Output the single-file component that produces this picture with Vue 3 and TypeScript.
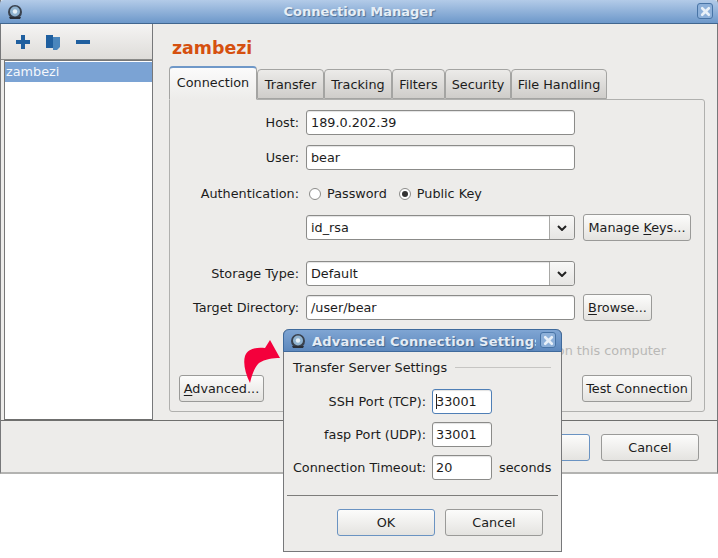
<script setup lang="ts">
const tabs: string[] = ['Connection', 'Transfer', 'Tracking', 'Filters', 'Security', 'File Handling']
const widths: number[] = [88, 67, 68, 53, 66, 96]
</script>

<template>
  <div class="desk">
    <section class="win">
      <header class="titlebar">
        <svg class="appicon" viewBox="0 0 16 16"><circle cx="8" cy="8" r="7" fill="#39414d"/><circle cx="8" cy="7.5" r="5" fill="#8fb2cf"/><circle cx="8" cy="7.5" r="2.2" fill="#e6f0f7"/><path d="M2 13h12l-1 2H3z" fill="#2a2f38"/></svg>
        <span class="ttext">Connection Manager</span>
        <span class="close"><svg viewBox="0 0 10 10" width="11" height="11"><path d="M2 2l6 6M8 2l-6 6" stroke="#e8f0f8" stroke-width="2.4" stroke-linecap="round"/></svg></span>
      </header>
      <div class="body">
        <aside class="side">
          <div class="toolbar">
            <svg class="tool" viewBox="0 0 18 18"><path d="M7 2h4v5h5v4h-5v5H7v-5H2V7h5z" fill="#1f5f9f"/></svg>
            <svg class="tool" viewBox="0 0 18 18"><path d="M2 2h7v13H2z" fill="#1f5f9f"/><path d="M9 4h7v10l-3 3H9z" fill="#4a86bd"/></svg>
            <svg class="tool" viewBox="0 0 18 18"><rect x="2" y="7" width="14" height="4" fill="#1f5f9f"/></svg>
          </div>
          <div class="list"><div class="sel">zambezi</div></div>
        </aside>
        <main class="main">
          <h1 class="name">zambezi</h1>
          <div class="tabs">
            <div v-for="(t, i) in tabs" :key="t" class="tab" :class="{ active: i === 0 }" :style="{ width: widths[i] + 'px' }">{{ t }}</div>
          </div>
          <div class="pane">
            <div class="row r1"><label>Host:</label><div class="input wide">189.0.202.39</div></div>
            <div class="row r2"><label>User:</label><div class="input wide">bear</div></div>
            <div class="row r3">
              <label>Authentication:</label>
              <span class="radio"></span><span class="rlabel">Password</span>
              <span class="radio on"></span><span class="rlabel">Public Key</span>
            </div>
            <div class="row r4">
              <label></label>
              <div class="input wide combo"><span>id_rsa</span><i class="arrow"><svg viewBox="0 0 10 6" width="10" height="6"><path d="M1 1l4 4 4-4" fill="none" stroke="#222" stroke-width="2"/></svg></i></div>
              <button class="btn keys">Manage <u>K</u>eys...</button>
            </div>
            <div class="row r5">
              <label>Storage Type:</label>
              <div class="input wide combo"><span>Default</span><i class="arrow"><svg viewBox="0 0 10 6" width="10" height="6"><path d="M1 1l4 4 4-4" fill="none" stroke="#222" stroke-width="2"/></svg></i></div>
            </div>
            <div class="row r6">
              <label>Target Directory:</label>
              <div class="input wide">/user/bear</div>
              <button class="btn browse"><u>B</u>rowse...</button>
            </div>
            <div class="faint">on this computer</div>
            <div class="actions">
              <button class="btn adv"><u>A</u>dvanced...</button>
              <button class="btn test">Test Connection</button>
            </div>
          </div>
        </main>
      </div>
      <footer class="foot">
        <button class="btn dlg focus">OK</button>
        <button class="btn dlg">Cancel</button>
      </footer>
    </section>

    <svg class="curve" viewBox="0 0 42 46" width="42" height="46"><path d="M10 44C5 34 3 24 5 17 8 10 15 8 25 9L30 1 40 19C33 19 25 20 19 24 15 28 12 35 10 44Z" fill="#f4003c"/></svg>

    <section class="dialog">
      <header class="dtitle">
        <svg class="appicon" viewBox="0 0 16 16"><circle cx="8" cy="8" r="7" fill="#39414d"/><circle cx="8" cy="7.5" r="5" fill="#8fb2cf"/><circle cx="8" cy="7.5" r="2.2" fill="#e6f0f7"/><path d="M2 13h12l-1 2H3z" fill="#2a2f38"/></svg>
        <span class="dttext">Advanced Connection Settings</span>
        <span class="close dclose"><svg viewBox="0 0 10 10" width="11" height="11"><path d="M2 2l6 6M8 2l-6 6" stroke="#e8f0f8" stroke-width="2.4" stroke-linecap="round"/></svg></span>
      </header>
      <div class="group"><span>Transfer Server Settings</span><i></i></div>
      <div class="drow d1"><label>SSH Port (TCP):</label><div class="input port focused"><b class="caret"></b>33001</div></div>
      <div class="drow d2"><label>fasp Port (UDP):</label><div class="input port">33001</div></div>
      <div class="drow d3"><label>Connection Timeout:</label><div class="input port">20</div><span class="unit">seconds</span></div>
      <div class="dsep"></div>
      <div class="dbtns">
        <button class="btn dlg focus">OK</button>
        <button class="btn dlg">Cancel</button>
      </div>
    </section>
  </div>
</template>

<style>
html, body { margin: 0; background: #fff; }
</style>

<style scoped>
.desk { position: relative; width: 718px; height: 558px; overflow: hidden; background: #fff; font: 12.8px "DejaVu Sans", sans-serif; color: #1c1c1c; }
.win { width: 718px; height: 474px; box-sizing: border-box; display: flex; flex-direction: column; background: #edecea; border-left: 1px solid #77787a; border-right: 1px solid #77787a; border-bottom: 2px solid #b3b3b1; }
.titlebar { height: 24px; flex: none; position: relative; display: flex; align-items: center; justify-content: center; margin-left: -1px; margin-right: -1px; background: linear-gradient(#b3cbe8, #6d98ca); border-bottom: 1px solid #41668f; border-radius: 4px 4px 0 0; box-sizing: border-box; }
.appicon { position: absolute; left: 7px; top: 4px; width: 16px; height: 16px; }
.ttext { font-size: 13px; font-weight: bold; color: #e6eef6; letter-spacing: 0; text-shadow: 1px 1px 1px #4e7199; }
.close { position: absolute; right: 5px; top: 3px; width: 16px; height: 16px; box-sizing: border-box; border: 1px solid #4874a6; border-radius: 3px; background: #8db0d9; display: flex; align-items: center; justify-content: center; }
.body { height: 397px; flex: none; display: flex; border-bottom: 1px solid #6f6f6e; box-sizing: border-box; }
.side { width: 151px; flex: none; display: flex; flex-direction: column; border-right: 1px solid #77787a; }
.toolbar { height: 36px; flex: none; box-sizing: border-box; display: flex; align-items: center; gap: 12px; padding: 0 0 0 13px; background: linear-gradient(#f5f4f3, #dedcd9); border-bottom: 1px solid #8a8a88; }
.tool { width: 18px; height: 18px; }
.list { flex: 1; margin-left: 3px; background: #fff; border-left: 1px solid #777; border-top: 1px solid #777; padding-top: 1px; border-bottom: 1px solid #6f6f6e; }
.sel { height: 20px; line-height: 19px; background: #7ba3d4; color: #f4f7fb; padding-left: 1px; }
.main { flex: 1; padding-left: 16px; position: relative; }
.name { margin: 0; height: 42px; padding: 14px 0 0 3px; box-sizing: border-box; font-size: 17.4px; line-height: 21px; font-weight: bold; color: #d5500f; }
.tabs { display: flex; align-items: flex-end; height: 33px; position: relative; z-index: 1; }
.tab { height: 30px; box-sizing: border-box; line-height: 29px; text-align: center; background: linear-gradient(#ecebe9, #cfcdca); border: 1px solid #a4a4a2; border-bottom: 1px solid #a4a4a2; border-radius: 4px 4px 0 0; white-space: nowrap; }
.tab.active { height: 34px; line-height: 29px; background: linear-gradient(#fbfbfb, #edecea); border-color: #a4a4a2; border-top: 2px solid #6f98c8; border-bottom-color: #edecea; margin-bottom: -1px; }
.pane { width: 536px; height: 313px; box-sizing: border-box; border: 1px solid #b0b0ae; border-radius: 0 3px 3px 3px; position: relative; }
.row { display: flex; align-items: center; margin-left: 0; }
.row label { width: 129px; margin-right: 7px; text-align: right; flex: none; }
.r1 { margin-top: 10px; height: 25px; }
.r2 { margin-top: 10px; height: 25px; }
.r3 { margin-top: 11px; height: 25px; }
.r4 { margin-top: 9px; height: 25px; }
.r5 { margin-top: 21px; height: 25px; }
.r6 { margin-top: 9px; height: 25px; }
.input { height: 25px; box-sizing: border-box; background: #fff; border: 1px solid #8b8b89; border-radius: 3px; padding-left: 4px; line-height: 23px; box-shadow: inset 0 1px 1px #e3e3e3; }
.wide { width: 269px; flex: none; }
.combo { display: flex; justify-content: space-between; padding-right: 0; }
.arrow { width: 25px; box-sizing: border-box; border-left: 1px solid #a8a8a6; display: flex; align-items: center; justify-content: center; background: linear-gradient(#f8f8f7, #e6e5e3); border-radius: 0 3px 3px 0; }
.radio { width: 12px; height: 12px; box-sizing: border-box; border: 1px solid #8b8b89; border-radius: 50%; background: #fff; margin-left: 3px; position: relative; flex: none; }
.radio.on { margin-left: 12px; }
.radio.on::after { content: ""; position: absolute; left: 2px; top: 2px; width: 6px; height: 6px; border-radius: 50%; background: #333; }
.rlabel { margin-left: 6px; }
.btn { height: 27px; box-sizing: border-box; padding: 0; border: 1px solid #9a9a98; border-radius: 3px; background: linear-gradient(#fcfcfb, #e4e3e0); font: inherit; color: #1c1c1c; }
.btn u { text-decoration-thickness: 1px; text-underline-offset: 2px; }
.keys { width: 108px; margin-left: 8px; margin-top: -1px; flex: none; }
.browse { width: 69px; margin-left: 8px; margin-top: -1px; flex: none; }
.faint { margin-top: 21px; height: 20px; line-height: 20px; text-align: right; padding-right: 38px; color: #b9b8b6; }
.actions { display: flex; justify-content: space-between; margin-top: 14px; padding: 0 12px 0 9px; }
.adv { width: 85px; }
.test { width: 110px; }
.foot { flex: 1; display: flex; justify-content: flex-end; gap: 11px; padding: 13px 18px 0 0; }
.dlg { width: 98px; }
.focus { border-color: #6a93c2; }
.curve { position: absolute; left: 240px; top: 339px; z-index: 2; }
.dialog { position: absolute; left: 283px; top: 329px; width: 279px; height: 223px; box-sizing: border-box; background: #edecea; border: 1px solid #77787a; border-top: none; border-radius: 6px 6px 0 0; z-index: 3; }
.dtitle { height: 23px; margin: 0 -1px; box-sizing: border-box; position: relative; background: linear-gradient(#7fa5d3, #5d88bd); border: 1px solid #3f6a9c; border-radius: 6px 6px 0 0; overflow: hidden; }
.dtitle .appicon { left: 6px; top: 3px; }
.dttext { position: absolute; left: 28px; top: 3px; width: 224px; overflow: hidden; white-space: nowrap; font-size: 13px; font-weight: bold; color: #e4ecf5; letter-spacing: .2px; line-height: 18px; text-shadow: 1px 1px 1px #3f648f; }
.dclose { right: 5px; top: 2px; }
.group { display: flex; align-items: center; padding: 7px 10px 0 9px; height: 24px; box-sizing: border-box; line-height: 17px; }
.group i { flex: 1; height: 1px; background: #c6c5c3; margin-left: 8px; }
.drow { display: flex; align-items: center; height: 25px; }
.drow label { width: 142px; text-align: right; margin-right: 6px; flex: none; }
.d1 { margin-top: 13px; }
.d2 { margin-top: 8px; }
.d3 { margin-top: 8px; }
.port { width: 60px; flex: none; position: relative; padding-left: 3px; }
.focused { border-color: #4f7fb6; }
.caret { position: absolute; left: 3px; top: 4px; width: 1px; height: 15px; background: #222; }
.unit { margin-left: 7px; }
.dsep { height: 1px; background: #7d7d7b; margin: 15px 3px 0; }
.dbtns { display: flex; justify-content: flex-end; gap: 10px; padding: 13px 18px 0 0; }
</style>
